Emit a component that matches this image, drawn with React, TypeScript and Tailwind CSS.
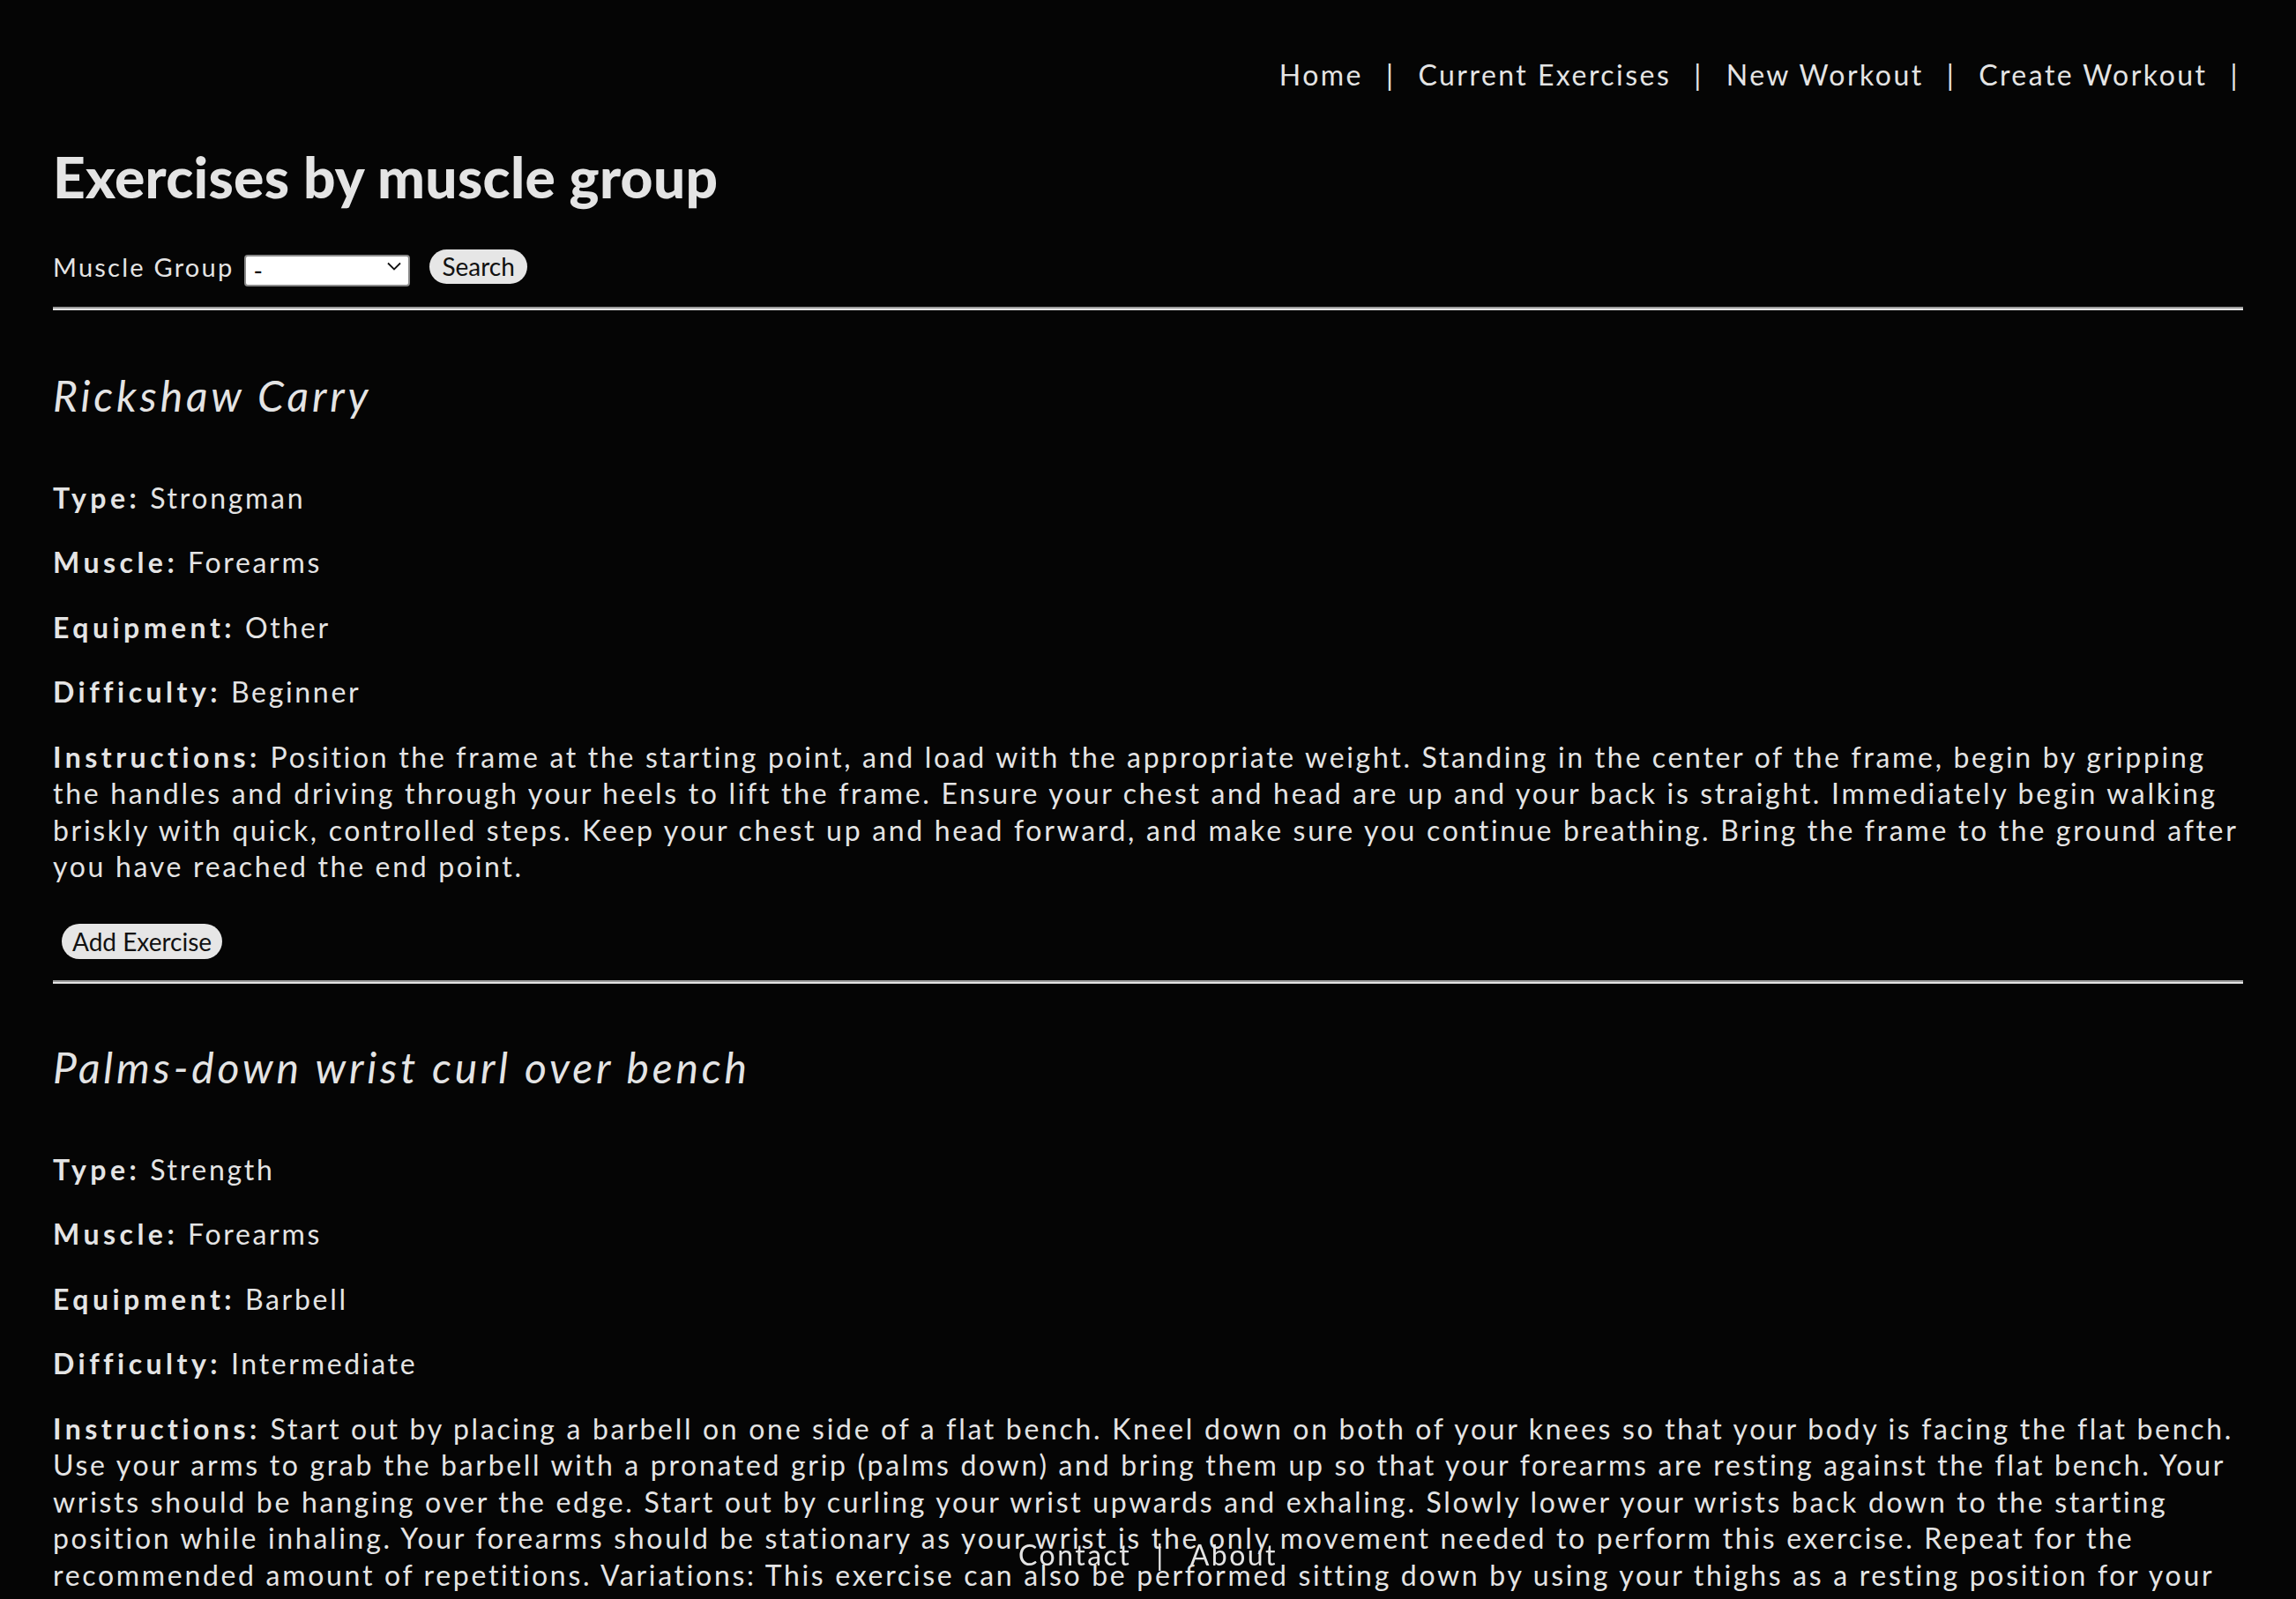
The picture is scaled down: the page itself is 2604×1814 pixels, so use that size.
import React from "react";

const exercises = [
  {
    name: "Rickshaw Carry",
    type: "Strongman",
    muscle: "Forearms",
    equipment: "Other",
    difficulty: "Beginner",
    instructions:
      "Position the frame at the starting point, and load with the appropriate weight. Standing in the center of the frame, begin by gripping the handles and driving through your heels to lift the frame. Ensure your chest and head are up and your back is straight. Immediately begin walking briskly with quick, controlled steps. Keep your chest up and head forward, and make sure you continue breathing. Bring the frame to the ground after you have reached the end point.",
  },
  {
    name: "Palms-down wrist curl over bench",
    type: "Strength",
    muscle: "Forearms",
    equipment: "Barbell",
    difficulty: "Intermediate",
    instructions:
      "Start out by placing a barbell on one side of a flat bench. Kneel down on both of your knees so that your body is facing the flat bench. Use your arms to grab the barbell with a pronated grip (palms down) and bring them up so that your forearms are resting against the flat bench. Your wrists should be hanging over the edge. Start out by curling your wrist upwards and exhaling. Slowly lower your wrists back down to the starting position while inhaling. Your forearms should be stationary as your wrist is the only movement needed to perform this exercise. Repeat for the recommended amount of repetitions. Variations: This exercise can also be performed sitting down by using your thighs as a resting position for your forearms.",
  },
];

function Rule() {
  return <div className="h-[4px] border-t-2 border-b-2 border-t-[#9a9a9a] border-b-[#e4e4e4]" />;
}

function Field({ label, value }: { label: string; value: string }) {
  return (
    <p>
      <span className="font-bold tracking-[0.14em]">{label}:</span> {value}
    </p>
  );
}

export default function App() {
  const navItems = ["Home", "Current Exercises", "New Workout", "Create Workout"];
  return (
    <div
      className="min-h-screen bg-[#050505] text-[#e4e4e4] text-[32px] leading-[41.5px] tracking-[0.084em]"
      style={{ fontFamily: "Lato, 'Noto Sans', sans-serif" }}
    >
      <nav className="flex justify-end pt-[64px] pr-[64px] tracking-[0.077em]">
        <ul className="flex items-center gap-[26px]">
          {navItems.map((n) => (
            <React.Fragment key={n}>
              <li>
                <a href="#">{n}</a>
              </li>
              <li aria-hidden>|</li>
            </React.Fragment>
          ))}
        </ul>
      </nav>

      <main className="px-[60px]">
        <h1 className="mt-[53px] text-[64px] leading-[83px] font-black tracking-[0.005em]">
          Exercises by muscle group
        </h1>

        <form className="mt-[40px] flex h-[42px] items-center">
          <label className="mr-[12px] text-[29px] tracking-[0.077em]">Muscle Group</label>
          <div className="relative h-[36px] w-[188px]">
            <select className="h-full w-full appearance-none rounded-[4px] border-2 border-[#8a8a8a] bg-white pl-[8px] text-[28px] leading-[32px] tracking-normal text-black">
              <option>-</option>
            </select>
            <svg
              className="pointer-events-none absolute right-[10px] top-[12px]"
              width="16"
              height="10"
              viewBox="0 0 16 10"
              fill="none"
              stroke="#111"
              strokeWidth="1.8"
            >
              <path d="M1 1.5 L8 8.5 L15 1.5" />
            </svg>
          </div>
          <button
            type="button"
            className="ml-[22px] h-[39px] rounded-full bg-[#e6e6e6] px-[14px] text-[28px] leading-[39px] tracking-normal text-[#111]"
          >
            Search
          </button>
        </form>

        <div className="mt-[24px]">
          <Rule />
        </div>

        {exercises.map((ex, i) => (
          <section key={ex.name}>
            <h2
              className={`${i === 0 ? "mt-[66px]" : "mt-[64px]"} text-[48px] leading-[62px] italic tracking-[0.08em]`}
            >
              {ex.name}
            </h2>
            <div className="mt-[64px] flex flex-col gap-[32px]">
              <Field label="Type" value={ex.type} />
              <Field label="Muscle" value={ex.muscle} />
              <Field label="Equipment" value={ex.equipment} />
              <Field label="Difficulty" value={ex.difficulty} />
              <Field label="Instructions" value={ex.instructions} />
            </div>
            <button
              type="button"
              className="ml-[10px] mt-[44px] h-[40px] rounded-full bg-[#e6e6e6] px-[12px] text-[28px] leading-[40px] tracking-normal text-[#111]"
            >
              Add Exercise
            </button>
            <div className="mt-[24px]">
              <Rule />
            </div>
          </section>
        ))}
        <div className="h-[120px]" />
      </main>

      <footer className="fixed bottom-[30px] left-0 right-0 flex justify-center gap-[28px] tracking-[0.077em]">
        <a href="#">Contact</a>
        <span>|</span>
        <a href="#">About</a>
      </footer>
    </div>
  );
}
